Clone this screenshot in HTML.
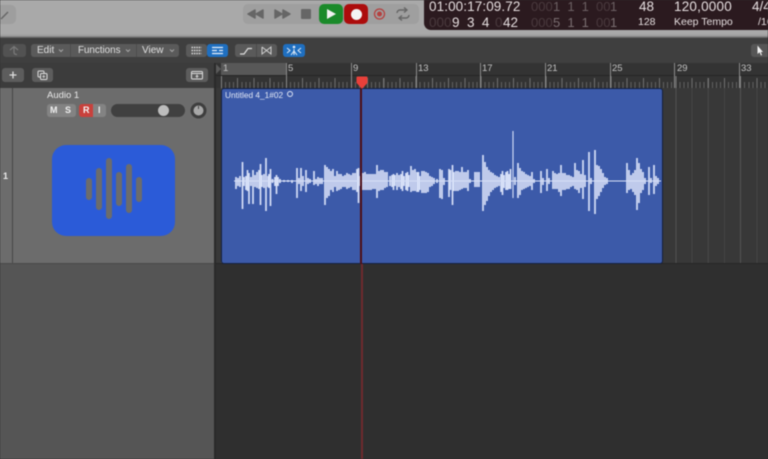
<!DOCTYPE html>
<html><head><meta charset="utf-8">
<style>
html,body{margin:0;padding:0;background:#2f2f2f}
#a{position:relative;width:768px;height:459px;overflow:hidden;font-family:"Liberation Sans",sans-serif;background:#2f2f2f;filter:blur(.45px)}
#a div{position:absolute;box-sizing:border-box}
.t{white-space:nowrap;line-height:1}
.btn{background:#5a5a5a;border-radius:3px}
.lcd{color:#e6dfe0;white-space:nowrap;line-height:1}
.dim{color:#4a3a3e}
.mid{color:#9a9092}
.rn{color:#c4c4c4;font-size:9.500px;top:64px;line-height:1}
</style></head><body>
<div id="a">
<!-- top bar -->
<div style="left:0;top:0;width:768px;height:38px;background:linear-gradient(#a9a9a9 0,#a9a9a9 34px,#9a9a9a 36px,#555 38px)"></div>
<div style="left:-10px;top:5px;width:26px;height:19px;background:#9e9e9e;border-radius:5px"></div>
<svg style="position:absolute;left:0;top:8px" width="12" height="12"><path d="M1 11L8 4" stroke="#666" stroke-width="1.400"/></svg>
<div style="left:243px;top:4px;width:176px;height:20px;background:#9f9f9f;border-radius:5px"></div>
<svg style="position:absolute;left:240px;top:0" width="190" height="30">
<path d="M8 14L15 10V18ZM16 14L23 10V18Z" fill="#666" stroke="#666" stroke-width="1.500" stroke-linejoin="round"/>
<path d="M35 10L42 14L35 18ZM43 10L50 14L43 18Z" fill="#666" stroke="#666" stroke-width="1.500" stroke-linejoin="round"/>
<rect x="61" y="9" width="10" height="10" rx="1" fill="#666"/>
<circle cx="139.500" cy="14" r="5" fill="none" stroke="#b5403f" stroke-width="1.300"/><circle cx="139.500" cy="14" r="2.500" fill="#b5403f"/>
<path d="M157 13a3 3 0 0 1 3-3h7M164 7.500l3 2.500-3 2.500M169 15a3 3 0 0 1-3 3h-7M162 20.500l-3-2.500 3-2.500" fill="none" stroke="#666" stroke-width="1.400"/>
</svg>
<div style="left:319px;top:4px;width:24px;height:20px;background:#1b8a2a;border-radius:5px"></div>
<svg style="position:absolute;left:319px;top:4px" width="24" height="20"><path d="M8 5L17 10L8 15Z" fill="#f2f2f2"/></svg>
<div style="left:344px;top:4px;width:24px;height:20px;background:#ac0c0c;border-radius:5px"></div>
<div style="left:351px;top:9px;width:11px;height:11px;background:#f4f4f4;border-radius:50%"></div>
<!-- LCD -->
<div style="left:424px;top:-6px;width:350px;height:36px;background:#2b1a1f;border-radius:7px"></div>
<div class="lcd" style="left:429px;top:0;font-size:13.500px;letter-spacing:.1px">01:00:17:09.72</div>
<div class="lcd dim" style="left:429px;top:16px;font-size:13.500px">000</div>
<div class="lcd" style="left:452px;top:16px;font-size:13.500px;word-spacing:3.700px">9 3 4</div>
<div class="lcd dim" style="left:495px;top:16px;font-size:13.500px">0</div>
<div class="lcd" style="left:503px;top:16px;font-size:13.500px">42</div>
<div class="lcd dim" style="left:531px;top:0;font-size:13px">000</div>
<div class="lcd" style="left:553px;top:0;font-size:13px;word-spacing:3.500px;color:#6c6063">1 1 1</div>
<div class="lcd dim" style="left:596px;top:0;font-size:13px">00</div>
<div class="lcd" style="left:610px;top:0;font-size:13px;color:#6c6063">1</div>
<div class="lcd dim" style="left:531px;top:16px;font-size:13px">000</div>
<div class="lcd" style="left:553px;top:16px;font-size:13px;word-spacing:3.500px;color:#7a6e71">5 1 1</div>
<div class="lcd dim" style="left:596px;top:16px;font-size:13px">00</div>
<div class="lcd" style="left:610px;top:16px;font-size:13px;color:#7a6e71">1</div>
<div class="lcd" style="left:639px;top:0;font-size:13.500px">48</div>
<div class="lcd" style="left:638px;top:17px;font-size:10.500px">128</div>
<div class="lcd" style="left:674px;top:0;font-size:13.500px;letter-spacing:.2px">120,0000</div>
<div class="lcd" style="left:674px;top:17px;font-size:10.500px">Keep Tempo</div>
<div class="lcd" style="left:752px;top:0;font-size:13.500px">4/4</div>
<div class="lcd" style="left:758px;top:17px;font-size:10.500px">/16</div>
<!-- toolbar -->
<div style="left:0;top:38px;width:768px;height:25px;background:#3f3f3f"></div>
<div class="btn" style="left:3px;top:44px;width:23px;height:13px;background:#525252"></div>
<svg style="position:absolute;left:8px;top:44px" width="14" height="13"><path d="M2 6L6 2.500L10 6M6 3V8.500Q6 10.500 9 10.500" fill="none" stroke="#7a7a7a" stroke-width="1.200"/></svg>
<div class="btn" style="left:31px;top:44px;width:148px;height:13px"></div>
<div class="t" style="left:37px;top:46px;font-size:10px;color:#e0e0e0">Edit</div>
<div class="t" style="left:78px;top:46px;font-size:9.800px;color:#e0e0e0">Functions</div>
<div class="t" style="left:142px;top:46px;font-size:10px;color:#e0e0e0">View</div>
<svg style="position:absolute;left:31px;top:44px" width="148" height="13"><path d="M28 5.500l2 2 2-2M95 5.500l2 2 2-2M139 5.500l2 2 2-2" fill="none" stroke="#a5a5a5"/><path d="M39.500 0V13M105.500 0V13" stroke="#4d4d4d"/></svg>
<div class="btn" style="left:186px;top:44px;width:21px;height:13px"></div>
<svg style="position:absolute;left:186px;top:44px" width="21" height="13"><path d="M5.500 3.500h10M5.500 6.500h10M5.500 9.500h10" stroke="#ddd" stroke-width="1.600" stroke-dasharray="1.500 .9"/></svg>
<div class="btn" style="left:207px;top:44px;width:21px;height:13px;background:#1f6fc0"></div>
<svg style="position:absolute;left:207px;top:44px" width="21" height="13"><path d="M5 3.500h11M5 6.500h5M12 6.500h4M5 9.500h11" stroke="#e8f0fa" stroke-width="1.300"/></svg>
<div class="btn" style="left:235px;top:44px;width:42px;height:13px"></div>
<svg style="position:absolute;left:235px;top:44px" width="42" height="13"><path d="M21.500 0V13" stroke="#4a4a4a"/><path d="M5 10H9L13 4.500H17" fill="none" stroke="#ddd" stroke-width="1.200"/><path d="M27 3V10L36 3V10L27 3" fill="none" stroke="#cfcfcf" stroke-width="1"/></svg>
<div class="btn" style="left:283px;top:44px;width:22px;height:13px;background:#1f6fc0"></div>
<svg style="position:absolute;left:283px;top:44px" width="22" height="13"><circle cx="11" cy="3" r="1.300" fill="#dfe9f5"/><path d="M11 5V11M4 4l3 2.500-3 2.500M18 4l-3 2.500 3 2.500M8 11l3-4 3 4" fill="none" stroke="#dfe9f5" stroke-width="1"/></svg>
<div class="btn" style="left:751px;top:44px;width:30px;height:13px;background:#565656"></div>
<svg style="position:absolute;left:755px;top:44px" width="10" height="13"><path d="M2.500 1.500L2.500 10L4.500 8.300L6 11.500L7 11L5.800 8H8Z" fill="#f2f2f2"/></svg>
<!-- second row left -->
<div style="left:0;top:63px;width:215px;height:25px;background:#3c3c3c"></div>
<div class="btn" style="left:2px;top:68px;width:22px;height:14px;background:#5d5d5d"></div>
<svg style="position:absolute;left:2px;top:68px" width="22" height="14"><path d="M11 3.500V10.500M7.500 7H14.500" stroke="#ddd" stroke-width="1.300"/></svg>
<div class="btn" style="left:32px;top:68px;width:21px;height:14px;background:#5d5d5d"></div>
<svg style="position:absolute;left:32px;top:68px" width="21" height="14"><rect x="6" y="3" width="6" height="6" rx="1" fill="none" stroke="#ddd"/><rect x="8.500" y="5.500" width="6.500" height="6" rx="1" fill="#5d5d5d" stroke="#ddd"/><path d="M11.700 7V10M10.200 8.500H13.200" stroke="#ddd" stroke-width=".8"/></svg>
<div class="btn" style="left:186px;top:68px;width:22px;height:14px;background:#5d5d5d"></div>
<svg style="position:absolute;left:186px;top:68px" width="22" height="14"><rect x="5.500" y="3.500" width="11" height="7.500" rx="1" fill="none" stroke="#ddd"/><path d="M5.500 5.500H16.500M11 6.500V10M9.500 8.300H12.500" stroke="#ddd" stroke-width=".9"/></svg>
<!-- track list -->
<div style="left:0;top:88px;width:215px;height:176px;background:#6c6c6c"></div>
<div style="left:12px;top:88px;width:1px;height:176px;background:#474747"></div>
<div style="left:0;top:264px;width:215px;height:195px;background:#555"></div>
<div style="left:0;top:263px;width:215px;height:1px;background:#4a4a4a"></div>
<div style="left:214px;top:63px;width:2px;height:396px;background:#2a2a2a"></div>
<div class="t" style="left:3px;top:172px;font-size:9px;font-weight:bold;color:#eee">1</div>
<div class="t" style="left:47px;top:91px;font-size:9.500px;color:#eaeaea">Audio 1</div>
<div style="left:47px;top:104px;width:29px;height:13px;background:#838383;border-radius:3px"></div>
<div class="t" style="left:50px;top:106px;font-size:9px;font-weight:bold;color:#eee">M</div>
<div class="t" style="left:65px;top:106px;font-size:9px;font-weight:bold;color:#eee">S</div>
<div style="left:79px;top:104px;width:14px;height:13px;background:#c8413c;border-radius:3px 0 0 3px"></div>
<div style="left:93px;top:104px;width:13px;height:13px;background:#838383;border-radius:0 3px 3px 0"></div>
<div class="t" style="left:83px;top:106px;font-size:9px;font-weight:bold;color:#f4f4f4">R</div>
<div class="t" style="left:98px;top:106px;font-size:9px;font-weight:bold;color:#eee">I</div>
<div style="left:111px;top:104px;width:74px;height:13px;background:#404040;border-radius:7px"></div>
<div style="left:158px;top:105px;width:11px;height:11px;background:#bdbdbd;border-radius:50%"></div>
<svg style="position:absolute;left:190px;top:102px" width="17" height="17"><circle cx="8.500" cy="8.500" r="6.500" fill="#a8a8a8" stroke="#3e3e3e" stroke-width="3"/><path d="M8.500 4V7" stroke="#444"/></svg>
<div style="left:52px;top:145px;width:123px;height:91px;background:#2b5bd8;border-radius:14px"></div>
<svg style="position:absolute;left:52px;top:145px" width="123" height="91"><g stroke="#6c6c6c" stroke-width="6" stroke-linecap="round"><path d="M37 36V52M47 26V62M57 16V71M67 30V58M77 22V65M87 35V54"/></g></svg>
<!-- ruler -->
<div style="left:216px;top:63px;width:552px;height:25px;background:#333"></div>
<div style="left:216px;top:75px;width:552px;height:1px;background:#262626"></div>
<div style="left:221px;top:63px;width:65px;height:12px;background:#585858"></div>
<svg style="position:absolute;left:216px;top:63px" width="6" height="12"><path d="M0 1L5 6L0 11Z" fill="#5a5a5a"/></svg>
<div style="left:221px;top:76px;width:547px;height:12px;background:
repeating-linear-gradient(90deg,#808080 0 1px,transparent 1px 64.900px) 0 0/100% 100% no-repeat,
repeating-linear-gradient(90deg,#707070 0 1px,transparent 1px 16.225px) 0 2px/100% 10px no-repeat,
repeating-linear-gradient(90deg,#626262 0 1px,transparent 1px 4.056px) 0 6px/100% 6px no-repeat"></div>
<div style="left:286px;top:63px;width:1px;height:25px;background:#8a8a8a"></div>
<div style="left:351px;top:63px;width:1px;height:25px;background:#8a8a8a"></div>
<div style="left:416px;top:63px;width:1px;height:25px;background:#8a8a8a"></div>
<div style="left:480px;top:63px;width:1px;height:25px;background:#8a8a8a"></div>
<div style="left:545px;top:63px;width:1px;height:25px;background:#8a8a8a"></div>
<div style="left:610px;top:63px;width:1px;height:25px;background:#8a8a8a"></div>
<div style="left:674px;top:63px;width:1px;height:25px;background:#8a8a8a"></div>
<div style="left:739px;top:63px;width:1px;height:25px;background:#8a8a8a"></div>
<div class="rn" style="left:223px">1</div><div class="rn" style="left:288px">5</div><div class="rn" style="left:353px">9</div><div class="rn" style="left:418px">13</div><div class="rn" style="left:482px">17</div><div class="rn" style="left:547px">21</div><div class="rn" style="left:612px">25</div><div class="rn" style="left:677px">29</div><div class="rn" style="left:741px">33</div>
<!-- arrange grid -->
<div style="left:216px;top:88px;width:552px;height:176px;background:#383838"></div>
<div style="left:221px;top:88px;width:547px;height:176px;background:
repeating-linear-gradient(90deg,#545454 0 1px,transparent 1px 64.900px),
repeating-linear-gradient(90deg,#444 0 1px,transparent 1px 16.225px)"></div>
<div style="left:216px;top:263px;width:552px;height:1px;background:#262626"></div>
<div style="left:216px;top:264px;width:552px;height:195px;background:#2f2f2f"></div>
<!-- region -->
<div style="left:221px;top:88px;width:442px;height:176px;background:#3c5aa9;border:1px solid #14203f;border-radius:3px"></div>
<div class="t" style="left:225px;top:90.500px;font-size:8.300px;color:#e2e8f6">Untitled 4_1#02</div>
<div style="left:287px;top:91px;width:6px;height:6px;border:1px solid #dfe6f5;border-radius:50%"></div>
<svg style="position:absolute;left:0;top:0" width="768" height="459">
<path d="M234 181H661" stroke="#dbe3f8" stroke-width="1"/>
<path stroke="#d6dff7" stroke-width="1.700" fill="none" d="M236 177V189M238 178V186M240 176V187M242.500 162V209M244 177V186M246 176V190M247.500 170V191M249 173V204M251 177V186M253 170V204M255 175V187M257 172V188M259 170V189M260.500 164V205M262 175V187M264 174V188M266 158V211M268 176V187M269 174V188M270.500 169V206M272.500 179V183M275 177V186M276.500 175V194M278 177V186M280 179V183M284 180V182M288 180V182M292 180V183M297 168V198M299 178V184M301 168V191M303 176V186M306 170V192M308 178V184M310 179V183M314 171V185M316 179V184M318 177V186M320 178V184M322 178V184M325 165V205M327 167V198M329 169V196M331 171V190M333 169V192M335 176V187M337 171V191M339 174V190M341 174V189M343 176V187M345 175V187M347 173V189M349 174V188M351 175V187M353 173V190M355 173V190M357 169V192M358.500 168V203M360 176V186"/>
<path stroke="#d6dff7" stroke-width="1.700" fill="none" d="M363 173V190M365 172V190M367 174V190M369 174V190M371 174V190M373 174V189M375 174V189M377 165V198M379 171V191M381 170V190M383 170V190M385 172V188M387 172V187M390 176V186M392 175V187M393.500 174V190M395 175V186M397 173V190M399 175V187M401 174V189M402.500 171V191M404 176V186M406 173V190M407.500 172V191M409 175V187M411 166V192M413 170V191M415 169V191M417 172V192M418.500 172V192M420 176V190M422 171V193M424 171V193M426 172V193M428 173V192M430 176V187M432 177V186M434 178V184M437 179V183M440 169V198M442 170V199M444 178V185M449 169V197M450.500 170V190M452.500 165V205M454 172V191M456 171V191M458 171V191M460 172V190M462 167V189M464 172V188M466 172V188M468 170V191M470 179V183M475 172V187M477 172V187M479 172V187M483 155V211M485 162V205M487 167V201M489 170V196M491 172V192M493 173V190M495 175V188M497 176V187M499 177V186M501 174V192M502.500 171V195M504 175V188M506 172V190M507.500 171V190M509 174V189M510.500 169V189M515 177V185M518 163V198M520 168V195M522 171V190M524 172V189M526 174V188M528 175V187M530 176V186M532 172V190M534 179V183M541 171V193M543 178V185M547 169V191M549 178V184M553 171V189M555 173V189M557 174V189M559 173V192M561 165V196M563 173V190M565 173V190M567 175V189M569 175V189M571 176V187M573 177V186M575 163V189M577 170V190M579 171V193M581 174V188M583 160V199M585 175V187M589 152V211M591 178V184M595 150V214M597 165V199M599 166V196M601 169V192M603 173V188M605 177V185M607 178V184M627 163V193M629 170V190M631 175V189M633 173V192M635 170V195M637 158V210M639 163V203M641 169V193M643 172V190M645 178V184M649 167V195M651 178V183M654 165V194M656 176V186M658 178V184"/>
<path stroke="#d6dff7" stroke-width="1.100" fill="none" d="M513 131V198"/>
</svg>
<!-- playhead -->
<div style="left:360px;top:88px;width:2px;height:176px;background:#4e0e14"></div>
<div style="left:361px;top:264px;width:1.500px;height:195px;background:#6e2a2e"></div>
<svg style="position:absolute;left:355px;top:76px" width="14" height="13"><path d="M2.500 1.500H11.500V6.500L7 11.500L2.500 6.500Z" fill="#e8403a" stroke="#e8403a" stroke-width="2" stroke-linejoin="round"/></svg>
</div>
</body></html>
